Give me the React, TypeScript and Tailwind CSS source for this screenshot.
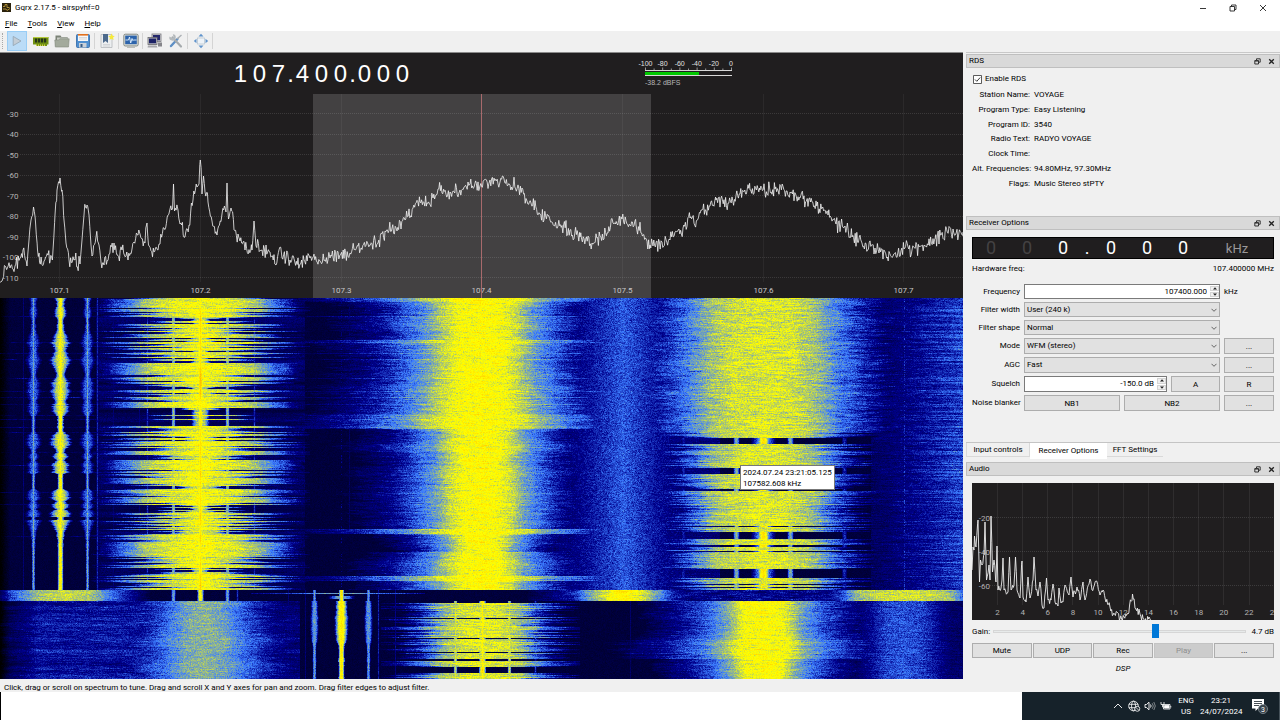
import { useLayoutEffect, useRef, type ReactNode } from 'react';

type Point = [number, number];

function createRandom(seed: number) {
  let s = seed;
  return () => {
    s = (s + 0x6d2b79f5) | 0;
    let t = Math.imul(s ^ (s >>> 15), 1 | s);
    t = (t + Math.imul(t ^ (t >>> 7), 61 | t)) ^ t;
    return ((t ^ (t >>> 14)) >>> 0) / 4294967296;
  };
}

/* ---------- spectrum traces ---------- */

const SPECTRUM: Point[] = [
  [0, 282], [2, 281], [5, 266], [10, 268], [15, 266], [20, 258], [23, 250], [27, 266], [29, 240], [31, 220],
  [33.5, 207], [35.5, 222], [37.5, 250], [39.5, 262], [44, 261], [48, 255], [50, 262], [53, 250], [55, 215],
  [57, 190], [60, 178], [62, 190], [64, 220], [66, 243], [69, 260], [75, 260], [80, 264], [82, 240], [84, 215],
  [87, 205], [89, 215], [91, 245], [92, 256], [96, 237], [99, 245], [101, 262], [104, 265], [109, 254],
  [114, 243], [117, 255], [122, 250], [128, 260], [134, 242], [140, 234], [145, 243], [147, 223], [148.5, 245],
  [154, 252], [160, 244], [164, 228], [168, 215], [170, 209], [172.5, 209], [173.5, 184], [174.5, 211],
  [178, 210], [180, 224], [185, 237], [189, 225], [193, 200], [197, 187], [199, 184], [200.3, 160], [202, 194],
  [203.5, 176], [205, 192], [208, 202], [212, 221], [217, 235], [222, 214], [225, 208], [226, 212], [227, 183],
  [228.5, 219], [231, 208], [234, 230], [240, 241], [245, 250], [252, 250], [254, 221], [256, 246], [262, 250],
  [270, 252], [276, 265], [280, 247], [282, 258], [290, 260], [300, 264], [310, 258], [320, 261], [330, 258],
  [340, 255], [350, 253], [358, 246], [368, 244], [378, 243], [385, 231], [392, 228], [397, 231], [405, 220],
  [413, 208], [420, 202], [427, 203], [433, 198], [438, 189], [450, 192], [460, 190], [470, 184], [480, 186],
  [490, 180], [500, 182], [510, 185], [522, 188], [527, 201], [540, 214], [550, 220], [558, 226], [570, 230],
  [580, 237], [592, 243], [600, 236], [608, 233], [613, 223], [622, 219], [630, 225], [636, 225], [643, 235],
  [650, 245], [653, 246], [662, 242], [670, 240], [675, 232], [683, 228], [690, 218], [697, 220], [702, 210],
  [710, 206], [716, 200], [728, 203], [740, 194], [750, 190], [760, 190], [775, 189], [790, 192], [800, 198],
  [812, 202], [822, 208], [828, 215], [836, 224], [845, 226], [852, 237], [862, 243], [875, 248], [885, 252],
  [893, 256], [904, 249], [912, 250], [925, 246], [935, 239], [945, 233], [963, 232],
];

const AUDIO: Point[] = [
  [972, 570], [973, 547], [974, 550], [974.5, 536], [976, 547], [978, 520], [979.5, 582], [980.5, 560],
  [982, 565], [984, 555], [985, 522], [986.5, 580], [989, 565], [990, 580], [991, 516], [992.5, 572],
  [994, 560], [996, 582], [997, 546], [998, 590], [1001, 588], [1002, 580], [1003, 558], [1004, 590],
  [1008, 592], [1009.5, 557], [1011, 590], [1014, 585], [1015.5, 557], [1017, 590], [1020, 598], [1022, 561],
  [1023, 597], [1026, 602], [1028, 577], [1030, 598], [1033, 580], [1034, 557], [1036, 590], [1038, 596],
  [1040, 582], [1042, 605], [1044, 608], [1046.5, 578], [1048, 600], [1051, 600], [1053, 584], [1055, 602],
  [1058, 606], [1059, 588], [1061, 603], [1063, 602], [1065, 585], [1069, 595], [1071, 577], [1073, 597],
  [1077, 587], [1080, 600], [1083, 582], [1085, 600], [1090, 579], [1092, 590], [1096, 581], [1100, 595],
  [1103, 590], [1106, 602], [1110, 607], [1113, 615], [1117, 612], [1120, 619], [1124, 617], [1128, 614],
  [1132.5, 594], [1135, 608], [1140, 614], [1143, 618], [1146, 621], [1149, 617], [1151, 621],
];

function tracePath(keys: Point[], seed: number, noise: number, step: number) {
  const random = createRandom(seed);
  const parts: string[] = [];
  for (let i = 0; i < keys.length - 1; i++) {
    const [x0, y0] = keys[i];
    const [x1, y1] = keys[i + 1];
    parts.push(`${x0} ${y0}`);
    for (let x = x0 + step; x < x1 - 0.4; x += step) {
      const y = y0 + ((y1 - y0) * (x - x0)) / (x1 - x0) + (random() + random() - 1) * noise;
      parts.push(`${x.toFixed(1)} ${y.toFixed(1)}`);
    }
  }
  parts.push(keys[keys.length - 1].join(' '));
  return 'M' + parts.join('L');
}

const SPECTRUM_PATH = tracePath(SPECTRUM, 11, 9, 0.8);
const AUDIO_PATH = tracePath(AUDIO, 5, 5, 0.8);

/* ---------- waterfall ---------- */

const WF_W = 963;
const WF_H = 381;

function palette(v: number): [number, number, number] {
  if (v < 20) return [0, 0, 0];
  if (v < 70) return [0, 0, (140 * (v - 20)) / 50];
  if (v < 100) return [(60 * (v - 70)) / 30, (125 * (v - 70)) / 30, (115 * (v - 70)) / 30 + 140];
  if (v < 150) return [(195 * (v - 100)) / 50 + 60, (130 * (v - 100)) / 50 + 125, 255 - (255 * (v - 100)) / 50];
  if (v < 250) return [255, 255 - (255 * (v - 150)) / 100, 0];
  return [255, 255, 255];
}

function smoothNoise(random: () => number, n: number, radius: number) {
  const raw = Array.from({ length: n + 2 * radius }, () => random() * 2 - 1);
  return Array.from({ length: n }, (_, i) => {
    let sum = 0;
    for (let k = 0; k <= 2 * radius; k++) sum += raw[i + k];
    return sum / Math.sqrt(2 * radius + 1);
  });
}

function profile(points: Point[], d: number) {
  if (d <= points[0][0]) return points[0][1];
  for (let i = 1; i < points.length; i++) {
    if (d <= points[i][0]) {
      const [a, va] = points[i - 1];
      const [b, vb] = points[i];
      return va + ((vb - va) * (d - a)) / (b - a);
    }
  }
  return 0;
}

const inRanges = (y: number, ranges: Point[]) => ranges.some(([a, b]) => y >= a && y < b);

const TALK: Point[] = [[0, 152], [16, 145], [38, 139], [56, 127], [70, 104], [88, 78], [104, 46]];
const MUSIC: Point[] = [[0, 152], [22, 148], [38, 135], [54, 113], [74, 95], [96, 76], [125, 58], [155, 42]];
const BROAD: Point[] = [[0, 141], [30, 138], [52, 126], [70, 105], [92, 85], [120, 62], [150, 46]];
const BURST: Point[] = [[0, 142], [30, 137], [56, 125], [74, 98], [94, 74], [118, 46]];
const LOBES: Point[] = [
  [298, 3], [304, 2.2], [313, 3.2], [321, 1.7], [331, 2.4], [338, 4], [343, 5.2], [349, 3], [354, 4], [361, 5.4],
  [368, 3.8], [373, 2.4], [377, 2.6], [383, 5], [392, 5], [400, 3.4], [408, 5], [413, 4], [416, 1.7], [431, 1.9],
  [436, 5], [444, 5.4], [452, 2], [456, 5], [460, 2.2], [464, 4.8], [470, 4], [472, 4.6], [474, 1.5], [488, 1.6],
  [491, 4], [498, 5.4], [501, 2.5], [506, 5.5], [509, 3], [511, 5.6], [516, 5.6], [517, 2], [519, 2], [520, 6],
  [526, 4], [532, 2.4], [541, 1.4], [546, 1.8], [552, 1.2], [590, 1.2],
];
const GAPS_106: Point[] = [[438, 444], [468, 474], [489, 491], [526, 527], [532, 539], [545, 547], [551, 552], [569, 578], [584, 585], [587, 588]];
const GAPS_104: Point[] = [[601, 603], [618, 619], [638, 639], [652, 653], [659, 661], [667, 673]];
const WIDE_104: Point[] = [[298, 302], [340, 343], [414, 429], [529, 534], [576, 581]];

function paintWaterfall(ctx: CanvasRenderingContext2D) {
  const random = createRandom(107400);
  const image = ctx.createImageData(WF_W, WF_H);
  const fine = smoothNoise(random, WF_H, 0);
  const medium = smoothNoise(random, WF_H, 2);
  const slow = smoothNoise(random, WF_H, 7);
  const other = smoothNoise(random, WF_H, 1);
  const edge = smoothNoise(random, WF_H, 4);

  for (let row = 0; row < WF_H; row++) {
    const y = row + 298;
    const top = y < 590;
    const band = y >= 590 && y < 601;
    const streakL = smoothNoise(random, WF_W, 5);
    const streakS = smoothNoise(random, WF_W, 1);

    const solid = inRanges(y, [[299, 307], [363, 375], [402, 408], [460, 470], [478, 483], [542, 554], [588, 590]]);
    const quiet = inRanges(y, [[358, 362], [410, 426]]);
    const talk = solid ? 1 : quiet ? (fine[row] > 0.7 ? 0.6 : 0.08) : Math.min(1.05, Math.max(0.1, 0.68 + fine[row] * 0.5 + medium[row] * 0.26));
    const lobes = Math.max(1.2, profile(LOBES, y) * (0.95 + fine[row] * 0.14));
    const width104 =
      inRanges(y, WIDE_104) ? 1.35 + fine[row] * 0.1 :
      y < 429 ? 0.94 + Math.max(0, (y - 298) / 900) + edge[row] * 0.08 + other[row] * 0.05 + (fine[row] > 0.88 ? 0.22 : 0) :
      y > 534 && y < 552 ? 0.66 + slow[row] * 0.08 :
      0.84 + edge[row] * 0.05 + other[row] * 0.04;
    const gap106 = y > 433 && inRanges(y, GAPS_106);
    const gap104 = inRanges(y, GAPS_104);

    for (let x = 0; x < WF_W; x++) {
      let v = 41 + (x > 880 ? 4 : 0);
      const add = (level: number) => {
        if (level > v) v = level;
      };
      const carrier = (cx: number, level: number, width: number) => {
        const d = Math.abs(x - cx);
        if (d < width * 4) add(level - (d / width) * (d / width) * 20);
      };

      if (top) {
        carrier(33, 96, lobes);
        carrier(60, 144, lobes);
        carrier(87, 96, lobes);
        carrier(33, 114, 0.9);
        carrier(60, 154, 1.4);
        carrier(87, 114, 0.9);
        carrier(97, 78, 0.9);
        if (x === 113 || x === 139 || x === 23) add(60);
        if (x < 110 && fine[row] > 0.9) add(54 + streakL[x] * 12);
        add(profile(TALK, Math.abs(x - 200) / Math.max(0.1, talk)) - (1 - Math.min(1, talk)) * 12 + streakL[x] * 8);
        if (Math.abs(x - 200) < 105) add(50 + other[row] * 9);
        carrier(200, 160 + slow[row] * 9, 1.3);
        carrier(200, 136, 3);
        carrier(173, 122, 1.2);
        carrier(227, 122, 1.2);
        carrier(147, 80, 1);
        carrier(254, 80, 1);
        if (x === 341 && random() > 0.72) add(66);
        if (x === 349 && y < 530) add(54);
        const side = x > 482 ? 0.92 : 1;
        add(profile(MUSIC, Math.abs(x - 482) / (width104 * side)) + streakL[x] * 7);
        if (x > 520) {
          add(92 - Math.abs(x - 623) * 0.55 + streakS[x] * 4);
          if (x < 720) add(62 + streakL[x] * 6);
        }
        if (x > 600) {
          const d = Math.abs(x - 763);
          if (y < 433) add(profile(BROAD, d / (1 + other[row] * 0.07)) + streakL[x] * 9);
          else if (gap106) {
            carrier(763, 162, 3);
            carrier(763, 110, 7);
            carrier(736, 118, 1.8);
            carrier(790, 118, 1.8);
            carrier(683, 76, 2);
            carrier(844, 80, 2);
          } else add(profile(BURST, d / (0.92 + fine[row] * 0.16)) + streakL[x] * 9);
          if (x > 870) add(52 + (x - 870) * 0.34 + (fine[row] > 0.5 ? (x - 870) * 0.14 : 0) + streakL[x] * 6);
          if (x === 904 && random() > 0.5) add(82);
        }
      } else if (band) {
        add(profile([[0, 136], [25, 128], [45, 100], [62, 76], [85, 44]], Math.abs(x - 64)) + streakL[x] * 5);
        carrier(173, 112, 1.4);
        carrier(200, 152, 1.6);
        carrier(227, 112, 1.4);
        carrier(237, 78, 0.9);
        if (y === 593 && x > 250 && x < 425) add(118 - Math.abs(x - 341) * 0.6);
        if (y > 595 && y < 599) carrier(341, 118, 7);
        add(profile([[0, 158], [12, 150], [25, 128], [38, 104], [50, 76], [95, 44]], Math.abs(x - 623)) + streakL[x] * 6);
        if (x > 640) add(68 + streakL[x] * 10);
        add(profile([[0, 138], [30, 134], [48, 122], [64, 84], [90, 44]], Math.abs(x - 904)) + streakL[x] * 6);
      } else {
        if (x < 300) {
          add(Math.min(74, 40 + x * 0.9) - Math.max(0, x - 170) * 0.1 + streakL[x] * 6 + other[row] * 5);
          const w = 1 + edge[row] * 0.1 - (y < 620 ? 0.12 : 0);
          add(profile([[0, 121], [18, 116], [34, 102], [52, 86], [75, 68], [110, 40]], Math.abs(x - 204) / w) + streakL[x] * 6);
        }
        if (x > 380 && x < 580) {
          if (gap104) {
            carrier(482, 165, 1.6);
            carrier(455, 135, 1);
            carrier(509, 135, 1);
            carrier(535, 80, 1);
          } else {
            add(profile([[0, 143], [26, 138], [46, 124], [62, 96], [82, 70], [102, 46]], Math.abs(x - 482) / (0.9 + fine[row] * 0.2)) + streakL[x] * 9);
            carrier(482, 154, 1);
            carrier(455, 138, 0.8);
            carrier(509, 138, 0.8);
          }
        }
        if (x === 630) add(56);
        if (x > 600) {
          const w = y < 640 ? 0.95 + edge[row] * 0.05 : y < 659 ? 1.15 + fine[row] * 0.1 : 0.82 + edge[row] * 0.05;
          add(profile([[0, 151], [22, 146], [40, 116], [62, 91], [90, 70], [130, 44]], Math.abs(x - 763) / w) + streakL[x] * 7);
          add(profile([[0, 90], [18, 86], [34, 70], [60, 44]], Math.abs(x - 904)) + streakL[x] * 5);
          if (x > 840) add(56 + streakL[x] * 6);
        }
      }
      if (y >= 590) {
        const w = band ? 1 : Math.max(1.1, 1.7 + slow[row] * 0.6 + Math.sin((y - 601) / 13) * 0.6);
        carrier(314, 110, w);
        carrier(341, 158, w * 1.25);
        carrier(368, 110, w);
        carrier(378, 76, 0.8);
        carrier(395, 66, 0.8);
        carrier(288, 62, 0.8);
        carrier(305, 60, 0.8);
      }
      if (x < 10) v -= (10 - x) * 2.2;
      const grain = v < 50 ? 5 : v < 80 ? 10 : v < 146 ? 14 : 9;
      v += (random() + random() - 1) * grain;
      const [r, g, b] = palette(v);
      const o = (row * WF_W + x) * 4;
      image.data[o] = r;
      image.data[o + 1] = g;
      image.data[o + 2] = b;
      image.data[o + 3] = 255;
    }
  }
  ctx.putImageData(image, 0, 0);
}

function Waterfall() {
  const ref = useRef<HTMLCanvasElement>(null);
  useLayoutEffect(() => {
    const ctx = ref.current?.getContext('2d');
    if (ctx) paintWaterfall(ctx);
  }, []);
  return (
    <div className="relative">
      <canvas ref={ref} width={WF_W} height={WF_H} className="block h-[381px] w-full" aria-label="Waterfall" />
      <div className="absolute left-[740px] top-[167px] border border-[#777] bg-white px-[2px] pt-px text-[8px] leading-[11px] whitespace-nowrap">
        <div>2024.07.24 23:21:05.125</div>
        <div>107582.608 kHz</div>
      </div>
    </div>
  );
}

/* ---------- plotter ---------- */

const FREQ_MARKS: [number, string][] = [
  [59.5, '107.1'], [200.5, '107.2'], [341.5, '107.3'], [481.5, '107.4'], [622.5, '107.5'], [763.5, '107.6'], [903.5, '107.7'],
];
const DB_MARKS = [-30, -40, -50, -60, -70, -80, -90, -100, -110];

function Plotter() {
  return (
    <svg className="block h-[204px] w-full" viewBox="0 94 963 204" preserveAspectRatio="none">
      <rect x="313" y="94" width="338" height="204" fill="#434142" />
      {DB_MARKS.map((db, i) => (
        <line key={db} x1="20" x2="963" y1={113.5 + Math.round(i * 20.5)} y2={113.5 + Math.round(i * 20.5)} stroke="#ffffff" strokeOpacity="0.12" strokeDasharray="1 1" />
      ))}
      {FREQ_MARKS.map(([x, label]) => (
        <line key={label} x1={x} x2={x} y1="94" y2="282" stroke="#ffffff" strokeOpacity="0.05" />
      ))}
      {DB_MARKS.map((db, i) => (
        <text key={db} x="18.5" y={116.5 + i * 20.5} textAnchor="end" fontSize="8" fill="#b4b2b3">{db}</text>
      ))}
      {FREQ_MARKS.map(([x, label]) => (
        <text key={label} x={x} y="293" textAnchor="middle" fontSize="8" fill="#c8c6c7">{label}</text>
      ))}
      <line x1="481.5" x2="481.5" y1="94" y2="298" stroke="#a86a6c" />
      <path d={SPECTRUM_PATH} fill="none" stroke="#f4f4f4" strokeWidth="0.8" />
    </svg>
  );
}

function Meter() {
  return (
    <svg className="block" width="110" height="37" viewBox="630 55 110 37" fontFamily="Liberation Sans, sans-serif" fontSize="7" fill="#e0e0e0">
      {[-100, -80, -60, -40, -20, 0].map((db, i) => (
        <text key={db} x={645.5 + i * 17.1} y="66" textAnchor="middle">{db}</text>
      ))}
      {Array.from({ length: 11 }, (_, i) => (
        <line key={i} x1={645.5 + i * 8.6} x2={645.5 + i * 8.6} y1={i % 2 ? 68.5 : 67.5} y2="70" stroke="#d0d0d0" strokeWidth="0.7" />
      ))}
      <line x1="645" x2="732" y1="70.5" y2="70.5" stroke="#d8d8d8" />
      <rect x="645" y="72" width="54" height="3" fill="#00c800" />
      <line x1="645" x2="732" y1="75.5" y2="75.5" stroke="#d8d8d8" />
      <text x="645" y="85" fill="#b8b8b8">-38.2 dBFS</text>
    </svg>
  );
}

/* ---------- toolbar ---------- */

function ToolButton({ label, active, children }: { label: string; active?: boolean; children: ReactNode }) {
  return (
    <button
      type="button"
      aria-label={label}
      className={active ? 'mr-[3px] flex h-5 w-5 items-center justify-center border border-[#99cdf5] bg-[#bbdcf7]' : 'flex h-5 w-[21px] items-center justify-center'}
    >
      <svg width="16" height="16" viewBox="0 0 16 16">{children}</svg>
    </button>
  );
}

const Separator = () => <span className="mx-px mt-[2px] h-4 w-px bg-[#d4d4d4]" />;

function Toolbar() {
  return (
    <div className="flex h-[21px] items-start bg-[#f0f0f0] pl-[2px]">
      <span className="mr-1 mt-[2px] h-4 w-px border-l border-dotted border-[#a8a8a8]" />
      <ToolButton label="Start DSP" active>
        <path d="M4.2 3.4 12 8l-7.800 4.600z" fill="#c3cdd6" stroke="#93a3b1" strokeWidth=".8" />
      </ToolButton>
      <ToolButton label="Configure I/O devices">
        <path d="M0 4h15.500v7.500H14V13H3v-1.500H0z" fill="#6f8f12" />
        <path d="M0 4h15.500v1H0z" fill="#b5c93c" />
        <path d="M2 5.500h2.200v4H2zM5 5.500h2.200v4H5zM8 5.500h2.200v4H8zM11 5.500h2.200v4H11z" fill="#26351b" />
        <path d="M3 11.500h1V13H3zM5 11.500h1V13H5zM7 11.500h1V13H7zM9 11.500h1V13H9zM11 11.500h1V13h-1z" fill="#d9d84a" />
      </ToolButton>
      <ToolButton label="Load settings">
        <path d="M1.500 2.500h5l1 1.500h6v9h-12z" fill="#7b8276" />
        <path d="M3 4.500h10V8H3z" fill="#c9ccc5" />
        <path d="M.8 7h4l1-1.200h9.400L14.500 14H1.300z" fill="#a3aa9c" stroke="#83897d" strokeWidth=".6" />
      </ToolButton>
      <ToolButton label="Save settings">
        <rect x="1.500" y="1.500" width="13" height="13" rx="1" fill="#4f8fd0" stroke="#2e66a3" strokeWidth=".8" />
        <path d="M3 1.300h10V8H3z" fill="#f8f8f8" />
        <path d="M3 1h10v1.600H3z" fill="#e2701c" />
        <path d="M4 4.500h8M4 6h8" stroke="#c4c4c4" strokeWidth=".6" />
        <path d="M4 10h7.500v4.500H4z" fill="#c9d0d8" />
        <path d="M5.500 11h2v3h-2z" fill="#355c88" />
      </ToolButton>
      <Separator />
      <ToolButton label="Bookmarks">
        <path d="M2 1.500h11V14.500H2z" fill="#eceef0" stroke="#b5b8bb" strokeWidth=".8" />
        <path d="M4 1h5v9L6.500 8 4 10z" fill="#4d6a8c" />
        <path d="M4 11.500h7M4 13h7" stroke="#c3c5c8" strokeWidth=".6" />
        <path d="m12.500.5 1 2.300 2.300.2-1.700 1.600.5 2.400-2.100-1.300L10.400 7l.5-2.400L9.200 3l2.300-.2z" fill="#f6ea3a" />
      </ToolButton>
      <Separator />
      <ToolButton label="Scope">
        <rect x=".8" y="1.200" width="14.400" height="11.800" rx="1.500" fill="#d8dbd6" stroke="#6f7671" strokeWidth=".8" />
        <rect x="2.200" y="2.600" width="11.600" height="8.600" fill="#2c63ab" />
        <path d="M2.500 7h3l1-3 1.200 6 1.300-4.500.8 2.200.8-.7h3" fill="none" stroke="#dff0ff" strokeWidth=".9" />
        <path d="M4 14.300h8" stroke="#aeb2ad" />
      </ToolButton>
      <Separator />
      <ToolButton label="Remote control">
        <rect x="5" y="1" width="9" height="7.500" fill="#cfcfd2" stroke="#77777d" strokeWidth=".8" />
        <path d="M6 2h7v5.300H6z" fill="#23276b" />
        <rect x="1" y="4.500" width="9" height="7" fill="#c4c4c8" stroke="#66666c" strokeWidth=".8" />
        <path d="M2 5.500h7v4.800H2z" fill="#1d2266" />
        <path d="M1 12.500h8.500l1 2H.5z" fill="#a8a8ac" />
        <path d="M11 9.500h4v4h-4z" fill="#85858a" />
      </ToolButton>
      <ToolButton label="Remote settings">
        <path d="m3 13 6.500-7" stroke="#5e8fc4" strokeWidth="2.400" strokeLinecap="round" />
        <path d="m9 6 4.500-4" stroke="#a9aeb2" strokeWidth="1.300" />
        <path d="m4.500 4.500 8.500 9" stroke="#a5aaad" strokeWidth="2.200" strokeLinecap="round" />
        <path d="M1.500 3.500 4 5l1.500-1L4.800 1.300A3.200 3.200 0 1 1 1.500 3.500z" fill="#b4b9bc" />
      </ToolButton>
      <Separator />
      <span className="w-px" />
      <ToolButton label="Full screen">
        <rect x="4.500" y="5" width="7" height="6" fill="#eef3f8" stroke="#b9c5d0" strokeWidth=".8" />
        <path d="M8 .8 10.500 3.500h-5zM8 15.200l2.500-2.700h-5zM.8 8l2.700-2.300v4.600zM15.200 8l-2.700-2.300v4.600z" fill="#5f93cc" />
      </ToolButton>
      <Separator />
    </div>
  );
}

/* ---------- docks ---------- */

function DockTitle({ title }: { title: string }) {
  return (
    <div className="flex h-[14px] items-center border border-[#bfbfbf] bg-[#d9d9d9] pl-[2px] pr-1">
      <h2 className="flex-1 leading-[14px]">{title}</h2>
      <button type="button" aria-label={`Float ${title}`} className="mr-[7px]">
        <svg width="7" height="7" viewBox="0 0 7 7" fill="none" stroke="#222" strokeWidth=".9"><path d="M2.500 2V.8h3.700v3.400H5M.8 2.600h3.700v3.400H.8zM.8 3h3.700" /></svg>
      </button>
      <button type="button" aria-label={`Close ${title}`}>
        <svg width="7" height="7" viewBox="0 0 7 7" stroke="#222" strokeWidth="1.300"><path d="m1.200 1.200 4.600 4.600M5.800 1.200 1.200 5.800" /></svg>
      </button>
    </div>
  );
}

function PushButton({ children, disabled, label }: { children: ReactNode; disabled?: boolean; label?: string }) {
  return (
    <button
      type="button"
      disabled={disabled}
      aria-label={label}
      className="h-full w-full min-w-0 border border-[#adadad] bg-[#e1e1e1] pt-px text-center disabled:border-[#c3c3c3] disabled:bg-[#cccccc] disabled:text-[#8f8f8f]"
    >
      {children}
    </button>
  );
}

function SelectBox({ id, value }: { id: string; value: string }) {
  return (
    <div className="relative col-span-2 h-full">
      <select id={id} defaultValue={value} className="block h-full w-full appearance-none border border-[#adadad] bg-[#e1e1e1] px-[2px]">
        <option>{value}</option>
      </select>
      <svg className="pointer-events-none absolute right-[3px] top-1/2 -mt-[3px]" width="6" height="6" viewBox="0 0 6 6" fill="none" stroke="#444" strokeWidth=".8"><path d="m.5 1.800 2.500 2.500 2.500-2.500" /></svg>
    </div>
  );
}

function SpinBox({ id, value, className }: { id: string; value: string; className: string }) {
  return (
    <div className={`flex h-full border border-[#7a7a7a] bg-white ${className}`}>
      <input id={id} type="text" defaultValue={value} className="w-0 min-w-0 flex-1 bg-transparent pr-[3px] text-right" />
      <div className="flex w-[9px] flex-col gap-px py-px">
        <button type="button" aria-label={`Increase ${id}`} className="flex flex-1 items-center justify-center border border-[#d4d4d4] bg-[#f0f0f0]">
          <svg width="4" height="3" viewBox="0 0 4 3"><path d="M2 .2 4 2.600H0z" fill="#222" /></svg>
        </button>
        <button type="button" aria-label={`Decrease ${id}`} className="flex flex-1 items-center justify-center border border-[#d4d4d4] bg-[#f0f0f0]">
          <svg width="4" height="3" viewBox="0 0 4 3"><path d="M2 2.800 4 .4H0z" fill="#222" /></svg>
        </button>
      </div>
    </div>
  );
}

const RDS_ROWS: [string, string][] = [
  ['Station Name:', 'VOYAGE'],
  ['Program Type:', 'Easy Listening'],
  ['Program ID:', '3540'],
  ['Radio Text:', 'RADYO VOYAGE'],
  ['Clock Time:', ''],
  ['Alt. Frequencies:', '94.80MHz, 97.30MHz'],
  ['Flags:', 'Music Stereo stPTY'],
];

function RdsDock() {
  return (
    <section className="h-[162px]">
      <DockTitle title="RDS" />
      <div className="pl-[6px] pt-[6px]">
        <label className="flex h-[10px] items-center gap-[3px] pl-px">
          <input type="checkbox" defaultChecked className="peer sr-only" />
          <svg width="9" height="9" viewBox="0 0 9 9" fill="none"><path d="M.5.500h8v8h-8z" fill="#fff" stroke="#333" strokeWidth=".8" /><path d="m2 4.500 1.800 1.800L7.200 2.500" stroke="#222" strokeWidth=".9" /></svg>
          Enable RDS
        </label>
        <dl className="mt-1 grid h-[103px] grid-cols-[58px_1fr] grid-rows-7 items-center gap-x-1">
          {RDS_ROWS.map(([name, value]) => (
            <div key={name} className="contents">
              <dt className="text-right whitespace-nowrap">{name}</dt>
              <dd>{value}</dd>
            </div>
          ))}
        </dl>
      </div>
    </section>
  );
}

function ReceiverDock() {
  return (
    <section>
      <DockTitle title="Receiver Options" />
      <div className="flex flex-col pl-[6px] pr-[6px] pt-[7px]">
        <div className="flex h-[22px] items-center border border-black bg-[#201e1f] text-center text-[18px] leading-none text-white">
          <span className="w-9 text-[#444243]">0</span>
          <span className="w-9 text-[#444243]">0</span>
          <span className="w-9">0</span>
          <span className="w-3">.</span>
          <span className="w-9">0</span>
          <span className="w-9">0</span>
          <span className="w-9">0</span>
          <span className="flex-1 text-[13px] text-[#9a9899]">kHz</span>
        </div>
        <div className="flex h-[19px] items-center justify-between">
          <span>Hardware freq:</span>
          <span>107.400000 MHz</span>
        </div>
        <form className="mt-[6px] grid grid-cols-[48px_96px_1fr_50px] grid-rows-[15px_15px_15px_16px_16px_16px_16px] items-center gap-x-1 gap-y-[3px]">
          <label htmlFor="frequency" className="text-right">Frequency</label>
          <SpinBox id="frequency" value="107400.000" className="col-span-2" />
          <span>kHz</span>
          <label htmlFor="filter-width" className="text-right">Filter width</label>
          <SelectBox id="filter-width" value="User (240 k)" />
          <span />
          <label htmlFor="filter-shape" className="text-right">Filter shape</label>
          <SelectBox id="filter-shape" value="Normal" />
          <span />
          <label htmlFor="mode" className="text-right">Mode</label>
          <SelectBox id="mode" value="WFM (stereo)" />
          <PushButton label="Mode options">...</PushButton>
          <label htmlFor="agc" className="text-right">AGC</label>
          <SelectBox id="agc" value="Fast" />
          <PushButton label="AGC options">...</PushButton>
          <label htmlFor="squelch" className="text-right">Squelch</label>
          <div className="col-span-2 flex h-full gap-1">
            <SpinBox id="squelch" value="-150.0 dB" className="flex-1" />
            <div className="w-[49px]"><PushButton>A</PushButton></div>
          </div>
          <PushButton>R</PushButton>
          <span className="text-right whitespace-nowrap">Noise blanker</span>
          <PushButton>NB1</PushButton>
          <PushButton>NB2</PushButton>
          <PushButton label="Noise blanker options">...</PushButton>
        </form>
      </div>
    </section>
  );
}

function AudioDock() {
  return (
    <section>
      <DockTitle title="Audio" />
      <div className="flex flex-col px-[6px] pt-[7px]">
        <svg className="block h-[137px] w-full bg-[#201e1f]" viewBox="972 483 302 137" preserveAspectRatio="none">
          {[517.5, 551.5, 585.5].map((y) => (
            <line key={y} x1="990" x2="1274" y1={y} y2={y} stroke="#fff" strokeOpacity=".13" strokeDasharray="1 1" />
          ))}
          {Array.from({ length: 11 }, (_, i) => (
            <line key={i} x1={997.5 + Math.round(i * 25.15)} x2={997.5 + Math.round(i * 25.15)} y1="483" y2="605" stroke="#fff" strokeOpacity=".07" />
          ))}
          {[-20, -40, -60].map((db, i) => (
            <text key={db} x="990" y={520.5 + i * 34.2} textAnchor="end" fontSize="8" fill="#b4b2b3">{db}</text>
          ))}
          {Array.from({ length: 12 }, (_, i) => (
            <text key={i} x={997.5 + i * 25.15} y="615" textAnchor="middle" fontSize="8" fill="#b4b2b3">{2 + i * 2}</text>
          ))}
          <path d={AUDIO_PATH} fill="none" stroke="#eee" strokeWidth=".9" />
        </svg>
        <div className="flex h-[23px] items-center">
          <label htmlFor="gain" className="w-[21px]">Gain:</label>
          <input
            id="gain"
            type="range"
            min="0"
            max="1000"
            defaultValue="646"
            className="h-[14px] min-w-0 flex-1 appearance-none bg-transparent [&::-webkit-slider-runnable-track]:h-[3px] [&::-webkit-slider-runnable-track]:border [&::-webkit-slider-runnable-track]:border-[#d6d6d6] [&::-webkit-slider-runnable-track]:bg-[#e7eaea] [&::-webkit-slider-thumb]:-mt-[7px] [&::-webkit-slider-thumb]:h-[14px] [&::-webkit-slider-thumb]:w-[7px] [&::-webkit-slider-thumb]:appearance-none [&::-webkit-slider-thumb]:bg-[#0078d7]"
          />
          <output htmlFor="gain" className="w-[28px] text-right">4.7 dB</output>
        </div>
        <div className="grid h-[15px] grid-cols-5 gap-px">
          <PushButton>Mute</PushButton>
          <PushButton>UDP</PushButton>
          <PushButton>Rec</PushButton>
          <PushButton disabled>Play</PushButton>
          <PushButton label="Audio options">...</PushButton>
        </div>
        <p className="h-5 text-center leading-[22px] italic">DSP</p>
      </div>
    </section>
  );
}

/* ---------- window ---------- */

function FrequencyDisplay() {
  return (
    <div className="flex text-center font-['Liberation_Sans',sans-serif] text-[24px] leading-[38px] text-white">
      {'107.400.000'.split('').map((c, i) => (
        <span key={i} className={c === '.' ? 'flex w-[5px] justify-center' : 'w-[19px]'}>{c}</span>
      ))}
    </div>
  );
}

export default function App() {
  return (
    <div className="flex min-h-screen flex-col bg-white font-['Roboto','Open_Sans',sans-serif] text-[8px] leading-[12px] text-black">
      <header>
        <div className="flex h-[15px] items-center pl-[2px]">
          <svg width="9" height="9" viewBox="0 0 9 9" className="mr-1"><path d="M0 0h9v9H0z" fill="#2b220c" /><path d="M1 3.500h2V1.500h2v3h2.500M1 6h3l1 1.500L8 5.500" fill="none" stroke="#b8963a" strokeWidth=".9" /></svg>
          <h1 className="flex-1 leading-[14px]">Gqrx 2.17.5 - airspyhf=0</h1>
          <div className="flex gap-[22px] pr-[13px]">
            <button type="button" aria-label="Minimize"><svg width="8" height="8" viewBox="0 0 8 8" stroke="#222"><path d="M1 4.500h6" strokeWidth=".9" /></svg></button>
            <button type="button" aria-label="Restore"><svg width="8" height="8" viewBox="0 0 8 8" fill="none" stroke="#222" strokeWidth=".9"><path d="M1 2.500h4.500V7H1zM2.500 2.500V1H7v4.500H5.500" /></svg></button>
            <button type="button" aria-label="Close"><svg width="8" height="8" viewBox="0 0 8 8" stroke="#222" strokeWidth=".9"><path d="m1 1 6 6M7 1 1 7" /></svg></button>
          </div>
        </div>
        <nav className="flex h-4 items-center gap-[10px] pl-[5px] pt-[2px]">
          <button type="button"><u>F</u>ile</button>
          <button type="button"><u>T</u>ools</button>
          <button type="button"><u>V</u>iew</button>
          <button type="button"><u>H</u>elp</button>
        </nav>
        <Toolbar />
      </header>

      <div className="flex bg-[#f0f0f0]">
        <main className="min-w-0 flex-1 border-t border-[#8a8a8a] bg-[#201e1f]">
          <div className="flex h-[41px] items-center">
            <div className="pl-[231px]"><FrequencyDisplay /></div>
            <div className="ml-auto pr-[223px]"><Meter /></div>
          </div>
          <Plotter />
          <Waterfall />
        </main>
        <aside className="ml-[3px] flex w-[314px] shrink-0 flex-col border-t border-[#c8c8c8] pt-px">
          <RdsDock />
          <ReceiverDock />
          <div className="mt-[31px] mb-1 flex h-4 border-t border-[#c4c4c4]" role="tablist">
            <button type="button" role="tab" className="h-[14px] w-[64px] border border-t-0 border-[#d9d9d9]">Input controls</button>
            <button type="button" role="tab" aria-selected="true" className="h-4 w-[77px] bg-white">Receiver Options</button>
            <button type="button" role="tab" className="h-[14px] w-[56px] border-b border-[#d9d9d9]">FFT Settings</button>
          </div>
          <AudioDock />
        </aside>
      </div>

      <footer className="flex flex-1 flex-col">
        <p className="h-[13px] bg-[#f0f0f0] pl-1 leading-[17px]">Click, drag or scroll on spectrum to tune. Drag and scroll X and Y axes for pan and zoom. Drag filter edges to adjust filter.</p>
        <div className="flex flex-1 border-l border-black">
          <div className="ml-auto flex w-[258px] items-center border-r border-[#46525a] bg-[#16222a] pl-[91px] text-white">
            <svg width="10" height="10" viewBox="0 0 10 10" fill="none" stroke="#fff" strokeWidth=".9"><path d="m1 7 4-4 4 4" /></svg>
            <svg className="ml-[5px]" width="13" height="12" viewBox="0 0 13 12" fill="none" stroke="#fff" strokeWidth=".8"><circle cx="5.500" cy="6" r="4.800" /><ellipse cx="5.500" cy="6" rx="2" ry="4.800" /><path d="M.8 4.300h9.400M.8 7.700H7" /><circle cx="9.300" cy="8.800" r="2.500" fill="#16222a" /><path d="m7.600 7.100 3.400 3.400" /></svg>
            <svg className="ml-[3px]" width="12" height="10" viewBox="0 0 12 10" fill="none" stroke="#fff" strokeWidth=".9"><path d="M1 3.500h1.500L5 1.200v7.600L2.500 6.500H1zM6.500 3.500q1.200 1.500 0 3" /><path d="M8.200 2.200q2.200 2.800 0 5.600M9.800 1q3 4 0 8" opacity=".5" /></svg>
            <svg className="ml-1" width="12" height="10" viewBox="0 0 12 10" fill="none" stroke="#fff" strokeWidth=".8"><path d="M3.500 3.500H10V8H3.500z" /><path d="M4.500 4.500H9V7H4.500z" fill="#fff" /><path d="M10.800 5v1.500M1 1v2.500h3V1M2.500 3.500V6h1" /></svg>
            <div className="ml-[4px] w-5 text-center leading-[11px]"><div>ENG</div><div>US</div></div>
            <div className="ml-[4px] w-[42px] text-center leading-[11px]"><div>23:21</div><div>24/07/2024</div></div>
            <svg className="ml-[9px]" width="18" height="18" viewBox="0 0 18 18"><path d="M1 2h12v9.500H7L4.500 14v-2.500H1z" fill="#fff" /><path d="M3 4.500h8M3 6.500h8M3 8.500h5" stroke="#16222a" strokeWidth=".8" /><circle cx="12" cy="12" r="4.600" fill="#3a454c" stroke="#8c979e" strokeWidth=".7" /><text x="12" y="14.500" fontSize="7" textAnchor="middle" fill="#fff">3</text></svg>
          </div>
        </div>
      </footer>
    </div>
  );
}
